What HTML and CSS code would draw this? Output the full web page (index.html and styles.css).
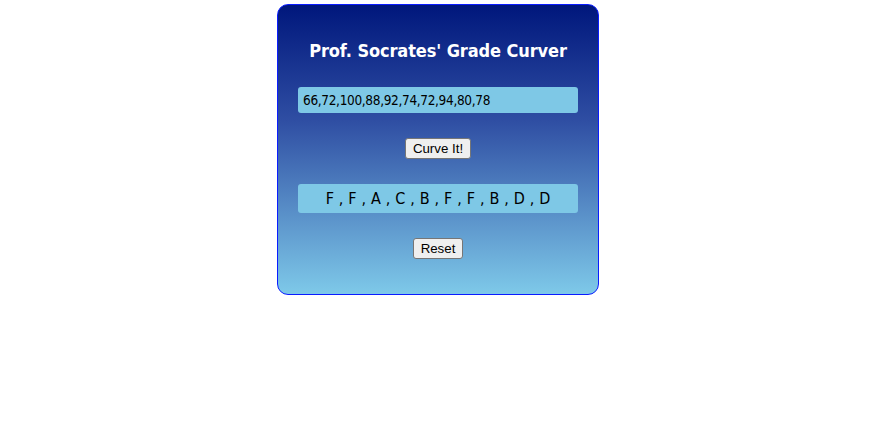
FILE: index.html
```html
<!DOCTYPE html>
<html>
<head>
<meta charset="utf-8">
<title>Grade Curver</title>
<link rel="stylesheet" href="styles.css">
</head>
<body>
<div class="card">
  <h1 class="title">Prof. Socrates' Grade Curver</h1>
  <div class="field">66,72,100,88,92,74,72,94,80,78</div>
  <button class="btn">Curve It!</button>
  <div class="result">F , F , A , C , B , F , F , B , D , D</div>
  <button class="btn">Reset</button>
</div>
</body>
</html>
```

FILE: styles.css
```css
html, body {
  margin: 0;
  padding: 0;
  background: #ffffff;
}
body {
  padding-top: 4px;
}
.card {
  box-sizing: border-box;
  width: 322px;
  height: 291px;
  margin-left: 277px;
  border: 1px solid #0a1cff;
  border-radius: 11px;
  background: linear-gradient(to bottom, #00177c 0%, #2f4ea3 40%, #7ec9e9 100%);
  padding: 35px 20px 0;
  display: flex;
  flex-direction: column;
  align-items: center;
  gap: 25px;
  font-family: "DejaVu Sans", Verdana, sans-serif;
}
.title {
  margin: 0;
  height: 22px;
  line-height: 22px;
  font-size: 18px;
  font-weight: bold;
  color: #ffffff;
  font-stretch: condensed;
  white-space: nowrap;
  letter-spacing: -0.1px;
}
.field {
  box-sizing: border-box;
  width: 280px;
  height: 26px;
  line-height: 26px;
  padding-left: 5px;
  background: #7ec8e6;
  border-radius: 3px;
  font-size: 13.5px;
  color: #000;
  font-stretch: condensed;
  letter-spacing: -0.33px;
}
.result {
  box-sizing: border-box;
  width: 280px;
  height: 29px;
  line-height: 29px;
  background: #7ec8e6;
  border-radius: 3px;
  text-align: center;
  font-size: 16px;
  color: #000;
  font-stretch: condensed;
  word-spacing: 0.35px;
}
.btn {
  box-sizing: border-box;
  height: 21px;
  padding: 0 6.5px;
  background: #efefef;
  border: 1px solid #767676;
  border-radius: 3px;
  font-family: "Liberation Sans", Arial, sans-serif;
  font-size: 13.3px;
  color: #000;
  line-height: 19px;
}
```
